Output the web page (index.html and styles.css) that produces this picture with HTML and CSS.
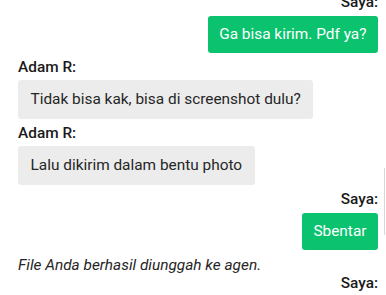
FILE: index.html
```html
<!DOCTYPE html>
<html>
<head>
    <title>Chat</title>
    <link rel="stylesheet" href="styles.css">
</head>
<body>
    <div class="chat">
        <div class="msg me">
            <div class="sender">Saya:</div>
            <div class="bubble">Ga bisa kirim. Pdf ya?</div>
        </div>
        <div class="msg agent">
            <div class="sender">Adam R:</div>
            <div class="bubble">Tidak bisa kak, bisa di screenshot dulu?</div>
        </div>
        <div class="msg agent">
            <div class="sender">Adam R:</div>
            <div class="bubble">Lalu dikirim dalam bentu photo</div>
        </div>
        <div class="msg me">
            <div class="sender">Saya:</div>
            <div class="bubble">Sbentar</div>
        </div>
        <div class="notice">File Anda berhasil diunggah ke agen.</div>
        <div class="msg me">
            <div class="sender">Saya:</div>
        </div>
    </div>
    <div class="scroll-thumb"></div>
</body>
</html>
```

FILE: styles.css
```css
body {
    font-family: Roboto, "Noto Sans", sans-serif;
    background-color: #fff;
    color: #222;
    margin: 0;
    padding: 0;
    overflow: hidden;
}
.chat {
    display: flex;
    flex-direction: column;
    margin-top: -7px;
    padding: 0 8px 0 18px;
}
.msg {
    display: flex;
    flex-direction: column;
    align-items: flex-start;
    margin-bottom: 5px;
}
.msg.me {
    align-items: flex-end;
}
.sender {
    font-size: 15.4px;
    font-weight: 500;
    line-height: 18px;
    margin-bottom: 4px;
    color: #1a1a1a;
}
.me .sender {
    margin-bottom: 5px;
}
.bubble {
    font-size: 15.4px;
    line-height: 20px;
    border-radius: 3px;
}
.me .bubble {
    background-color: #0bc26e;
    color: #fff;
    padding: 8px 11.5px 9px;
}
.agent .bubble {
    background-color: #ececec;
    color: #262626;
    padding: 9px 12.5px 10px;
}
.notice {
    font-size: 15.4px;
    font-style: italic;
    line-height: 17px;
    color: #262626;
    margin-top: 2px;
}
.scroll-thumb {
    position: absolute;
    left: 384px;
    top: 168px;
    width: 1px;
    height: 67px;
    background-color: #d8d8d8;
}
```
